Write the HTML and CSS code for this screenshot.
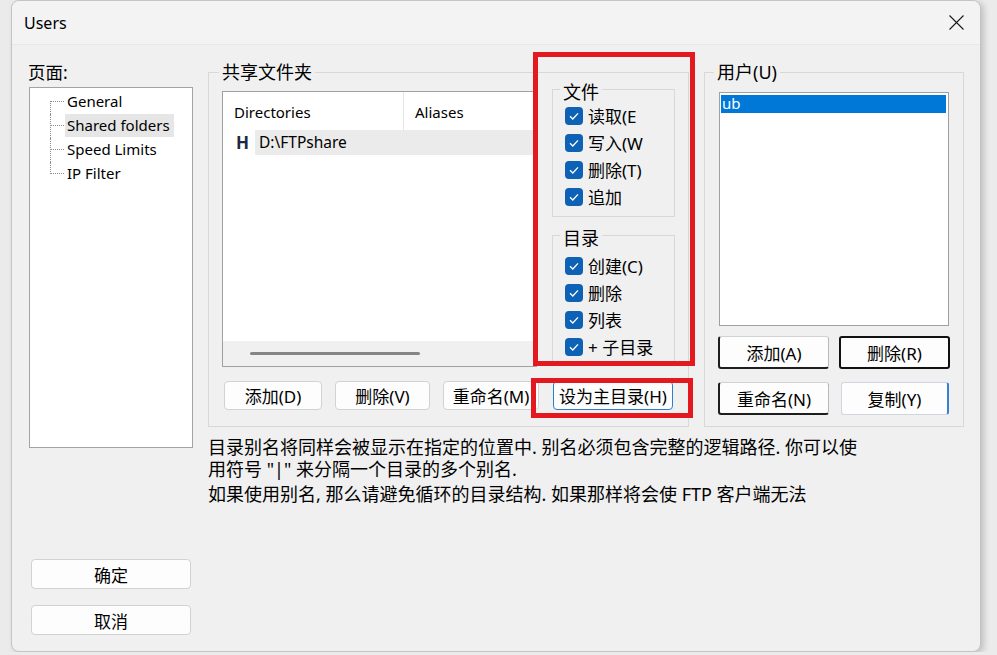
FILE: index.html
```html
<!DOCTYPE html>
<html lang="zh-CN">

<head>
    <meta charset="utf-8">
    <title>Users</title>
    <link rel="stylesheet" href="styles.css">
</head>

<body>
    <div class="window">
        <div class="titlebar">
            <span class="title">Users</span>
            <svg class="close" width="15" height="15" viewBox="0 0 15 15">
                <path d="M0.5 0.5 L14.5 14.5 M14.5 0.5 L0.5 14.5" stroke="#1a1a1a" stroke-width="1.1" fill="none"/>
            </svg>
        </div>

        <div class="content">
            <!-- venstre kolonne -->
            <div class="pages">
                <div class="pages-label">页面:</div>
                <div class="tree">
                    <ul>
                        <li><span>General</span></li>
                        <li><span class="selected">Shared folders</span></li>
                        <li><span>Speed Limits</span></li>
                        <li><span>IP Filter</span></li>
                    </ul>
                </div>
                <div class="dialog-buttons">
                    <button class="btn">确定</button>
                    <button class="btn">取消</button>
                </div>
            </div>

            <!-- delte mapper -->
            <fieldset class="shared">
                <legend>共享文件夹</legend>
                <div class="shared-main">
                    <div class="dir-list">
                        <div class="dir-head">
                            <div class="col">Directories</div>
                            <div class="col">Aliases</div>
                        </div>
                        <div class="dir-row">
                            <span class="home">H</span>
                            <span class="dir-path">D:\FTPshare</span>
                        </div>
                        <div class="hscroll"><div class="thumb"></div></div>
                    </div>

                    <div class="perms">
                        <fieldset class="perm-group">
                            <legend>文件</legend>
                            <div class="check-row"><span class="box"><svg width="12" height="12" viewBox="0 0 12 12"><path d="M2 6.3 L4.8 9 L10 3.4" stroke="#fff" stroke-width="1.3" fill="none"/></svg></span>读取(E</div>
                            <div class="check-row"><span class="box"><svg width="12" height="12" viewBox="0 0 12 12"><path d="M2 6.3 L4.8 9 L10 3.4" stroke="#fff" stroke-width="1.3" fill="none"/></svg></span>写入(W</div>
                            <div class="check-row"><span class="box"><svg width="12" height="12" viewBox="0 0 12 12"><path d="M2 6.3 L4.8 9 L10 3.4" stroke="#fff" stroke-width="1.3" fill="none"/></svg></span>删除(T)</div>
                            <div class="check-row"><span class="box"><svg width="12" height="12" viewBox="0 0 12 12"><path d="M2 6.3 L4.8 9 L10 3.4" stroke="#fff" stroke-width="1.3" fill="none"/></svg></span>追加</div>
                        </fieldset>
                        <fieldset class="perm-group dirs">
                            <legend>目录</legend>
                            <div class="check-row"><span class="box"><svg width="12" height="12" viewBox="0 0 12 12"><path d="M2 6.3 L4.8 9 L10 3.4" stroke="#fff" stroke-width="1.3" fill="none"/></svg></span>创建(C)</div>
                            <div class="check-row"><span class="box"><svg width="12" height="12" viewBox="0 0 12 12"><path d="M2 6.3 L4.8 9 L10 3.4" stroke="#fff" stroke-width="1.3" fill="none"/></svg></span>删除</div>
                            <div class="check-row"><span class="box"><svg width="12" height="12" viewBox="0 0 12 12"><path d="M2 6.3 L4.8 9 L10 3.4" stroke="#fff" stroke-width="1.3" fill="none"/></svg></span>列表</div>
                            <div class="check-row"><span class="box"><svg width="12" height="12" viewBox="0 0 12 12"><path d="M2 6.3 L4.8 9 L10 3.4" stroke="#fff" stroke-width="1.3" fill="none"/></svg></span>+ 子目录</div>
                        </fieldset>
                    </div>
                </div>

                <div class="shared-buttons">
                    <button class="btn b-add">添加(D)</button>
                    <button class="btn b-del">删除(V)</button>
                    <button class="btn b-ren">重命名(M)</button>
                    <button class="btn b-home">设为主目录(H)</button>
                </div>
            </fieldset>

            <!-- brugere -->
            <fieldset class="users">
                <legend>用户(U)</legend>
                <div class="user-list">
                    <div class="user-item">ub</div>
                </div>
                <div class="user-buttons">
                    <button class="btn odd">添加(A)</button>
                    <button class="btn default">删除(R)</button>
                    <button class="btn odd">重命名(N)</button>
                    <button class="btn copy">复制(Y)</button>
                </div>
            </fieldset>

            <div class="help">
                <p>目录别名将同样会被显示在指定的位置中. 别名必须包含完整的逻辑路径. 你可以使<br>用符号 "|" 来分隔一个目录的多个别名.</p>
                <p>如果使用别名, 那么请避免循环的目录结构. 如果那样将会使 FTP 客户端无法</p>
            </div>
        </div>

        <div class="mark mark-perms"></div>
        <div class="mark mark-home"></div>
    </div>
</body>
</html>
```

FILE: styles.css
```css
body {
    margin: 0;
    background: #ebebeb;
    font-family: "Noto Sans", "Noto Sans CJK SC", sans-serif;
    color: #000;
}

.window {
    box-sizing: border-box;
    position: relative;
    width: 970px;
    height: 652px;
    margin-left: 11px;
    display: flex;
    flex-direction: column;
    background: #f0f0f0;
    border: 1px solid #c4c4c4;
    border-radius: 8px;
    box-shadow: 3px 2px 6px rgba(0, 0, 0, 0.18);
}

.titlebar {
    height: 43px;
    display: flex;
    align-items: center;
    justify-content: space-between;
    padding: 0 16px 0 12px;
    background: #f3f3f3;
    border-bottom: 1px solid #e8e8e8;
    border-radius: 8px 8px 0 0;
}

.title {
    font-size: 16px;
}

.content {
    flex: 1;
    display: grid;
    grid-template-columns: 165px 481px 260px;
    grid-template-rows: auto 1fr;
    column-gap: 15px;
    padding: 17px 0 16px 16px;
}

/* venstre */
.pages {
    grid-row: 1 / 3;
    display: flex;
    flex-direction: column;
}

.pages-label {
    font-size: 17.5px;
    line-height: 20px;
}

.tree {
    box-sizing: border-box;
    height: 361px;
    margin: 5px 0 0 1px;
    background: #fff;
    border: 1px solid #9fa4a9;
}

.tree ul {
    list-style: none;
    margin: 0;
    padding: 2px 0 0 20px;
}

.tree li {
    position: relative;
    height: 24px;
    padding-left: 15px;
    font-size: 15px;
    line-height: 23px;
}

.tree li::before {
    content: "";
    position: absolute;
    left: 0;
    top: 0;
    height: 24px;
    border-left: 1px dotted #8c8c8c;
}

.tree li:first-child::before {
    top: 11px;
    height: 13px;
}

.tree li:last-child::before {
    height: 12px;
}

.tree li::after {
    content: "";
    position: absolute;
    left: 1px;
    top: 11px;
    width: 13px;
    border-top: 1px dotted #8c8c8c;
}

.tree li span {
    display: inline-block;
    padding: 0 4px 0 2px;
}

.tree li .selected {
    background: #e6e6e6;
}

.dialog-buttons {
    margin-top: auto;
    margin-left: 3px;
    width: 160px;
    display: flex;
    flex-direction: column;
    gap: 16px;
}

.btn {
    box-sizing: border-box;
    height: 30px;
    padding: 0;
    background: #fdfdfd;
    border: 1px solid #d2d2d2;
    border-radius: 4px;
    font-family: "Noto Sans", "Noto Sans CJK SC", sans-serif;
    font-size: 17px;
    color: #000;
}

/* midten */
fieldset {
    margin: 0;
    min-width: 0;
    border: 1px solid #d8d8d8;
}

legend {
    font-size: 18px;
    line-height: 20px;
    padding: 0 3px;
    margin-left: -3px;
}

.shared {
    padding: 9px 12px 14px 13px;
}

.shared-main {
    display: flex;
    align-items: flex-start;
}

.dir-list {
    box-sizing: border-box;
    width: 315px;
    height: 276px;
    display: flex;
    flex-direction: column;
    background: #fff;
    border: 1px solid #a0a0a0;
}

.dir-head {
    display: flex;
    height: 38px;
}

.dir-head .col {
    flex: 1;
    padding-left: 11px;
    box-sizing: border-box;
    font-size: 15px;
    line-height: 40px;
}

.dir-head .col:first-child {
    flex: 0 0 181px;
    border-right: 1px solid #e6e6e6;
}

.dir-row {
    display: flex;
    height: 25px;
}

.home {
    width: 32px;
    box-sizing: border-box;
    padding-left: 13px;
    font-size: 17px;
    font-weight: 700;
    line-height: 25px;
    color: #1b2a3c;
}

.dir-path {
    flex: 1;
    padding-left: 4px;
    background: #ebebeb;
    font-size: 15.5px;
    line-height: 25px;
}

.hscroll {
    margin-top: auto;
    height: 25px;
    display: flex;
    align-items: center;
    background: #f0f0f0;
}

.thumb {
    width: 170px;
    height: 3px;
    margin-left: 27px;
    background: #858585;
    border-radius: 2px;
}

.perms {
    width: 123px;
    margin: -14px 0 0 15px;
}

.perm-group {
    padding: 0 0 6px 12px;
}

.perm-group legend {
    padding: 5px 3px 0;
    margin-left: -5px;
}

.perm-group.dirs {
    margin-top: 6px;
    padding-top: 4px;
    padding-bottom: 5px;
}

.check-row {
    display: flex;
    align-items: center;
    gap: 5px;
    height: 27px;
    font-size: 17px;
    white-space: nowrap;
}

.box {
    width: 18px;
    height: 18px;
    display: flex;
    align-items: center;
    justify-content: center;
    background: #0d62b6;
    border-radius: 4px;
}

.shared-buttons {
    display: flex;
    gap: 13px;
    margin: 14px 0 0 2px;
}

.shared-buttons .btn {
    height: 29px;
}

.b-add {
    width: 98px;
}

.b-del {
    width: 95px;
}

.b-ren {
    width: 96px;
}

.b-home {
    width: 120px;
    margin-left: 1px;
    border: 1px solid #2f7bd0;
}

/* hoejre */
.users {
    padding: 10px 14px 11px 14px;
}

.users legend {
    margin-left: -5px;
}

.user-list {
    box-sizing: border-box;
    width: 230px;
    height: 234px;
    padding: 2px 2px 0 1px;
    background: #fff;
    border: 1px solid #a0a0a0;
}

.user-item {
    height: 18px;
    padding-left: 1px;
    background: #0078d7;
    color: #fff;
    font-size: 15px;
    line-height: 17px;
}

.user-buttons {
    display: grid;
    grid-template-columns: 111px 111px;
    column-gap: 10px;
    row-gap: 13px;
    margin: 10px 0 0 -1px;
}

.user-buttons .btn {
    height: 33px;
    border-radius: 3px;
}

.user-buttons .odd {
    border-left: 2px solid #1e1e1e;
    border-bottom: 2px solid #1e1e1e;
    border-right: 1px dotted #777;
}

.user-buttons .default {
    border: 2px solid #111;
}

.user-buttons .copy {
    margin-left: 2px;
    width: 108px;
    border-color: #cfd6df;
    border-right: 2px solid #3b7fd0;
}

.help {
    grid-column: 2 / 4;
    margin: 9px 0 0 0;
    font-size: 18px;
    line-height: 22px;
    white-space: nowrap;
}

.help p {
    margin: 0 0 3px;
}

/* roede markeringer */
.mark {
    position: absolute;
    box-sizing: border-box;
    border: 5px solid #e3191f;
}

.mark-perms {
    left: 521px;
    top: 51px;
    width: 162px;
    height: 314px;
}

.mark-home {
    left: 519px;
    top: 377px;
    width: 162px;
    height: 40px;
}
```
